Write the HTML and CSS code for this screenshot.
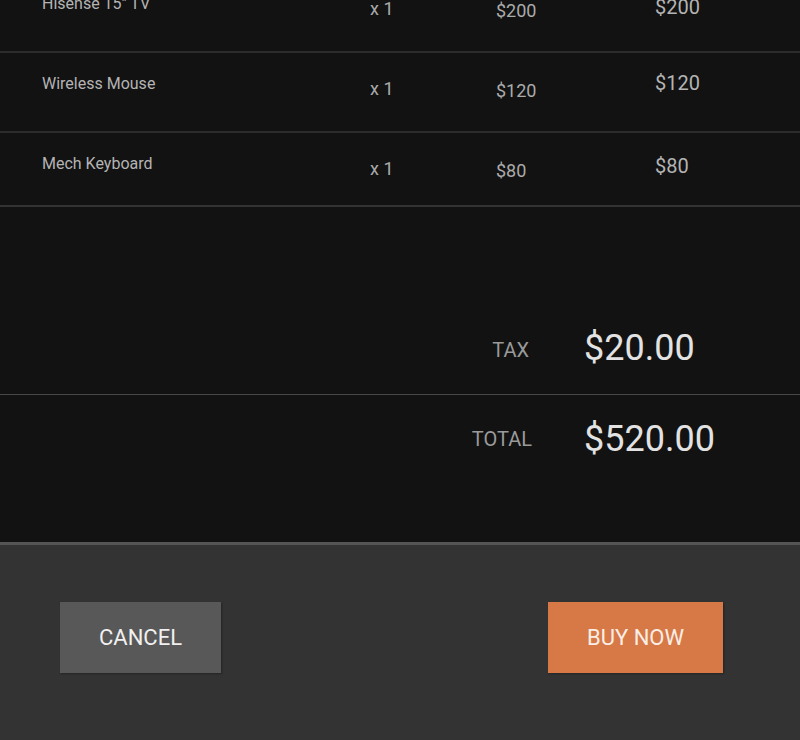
FILE: index.html
```html
<!DOCTYPE html>
<html>
<head>
<meta charset="utf-8">
<link rel="stylesheet" href="styles.css">
</head>
<body>
<div class="page">
  <div class="items">
    <div class="row row-1">
      <div class="cell name">Hisense 15" TV</div>
      <div class="cell qty">x 1</div>
      <div class="cell unit">$200</div>
      <div class="cell total">$200</div>
    </div>
    <div class="row row-2">
      <div class="cell name">Wireless Mouse</div>
      <div class="cell qty">x 1</div>
      <div class="cell unit">$120</div>
      <div class="cell total">$120</div>
    </div>
    <div class="row row-3">
      <div class="cell name">Mech Keyboard</div>
      <div class="cell qty">x 1</div>
      <div class="cell unit">$80</div>
      <div class="cell total">$80</div>
    </div>
  </div>
  <div class="summary">
    <div class="sum-row sum-tax">
      <div class="sum-label">TAX</div>
      <div class="sum-amount">$20.00</div>
    </div>
    <div class="sum-row sum-total">
      <div class="sum-label">TOTAL</div>
      <div class="sum-amount">$520.00</div>
    </div>
  </div>
  <div class="footer">
    <button class="btn btn-cancel">CANCEL</button>
    <button class="btn btn-buy">BUY NOW</button>
  </div>
</div>
</body>
</html>
```
FILE: styles.css
```css
html, body {
  margin: 0;
  padding: 0;
  background: #121212;
  font-family: Roboto, "Liberation Sans", sans-serif;
}

.page {
  width: 800px;
  overflow: hidden;
}

.items {
  margin-top: -27px;
}

.row {
  display: grid;
  grid-template-columns: 328px 126px 159px 1fr;
  padding-left: 42px;
  height: 78px;
  border-bottom: 2px solid #2c2c2c;
  align-items: start;
}

.row-3 {
  height: 72px;
  border-bottom-color: #333333;
}

.cell {
  line-height: 1;
  white-space: nowrap;
}

.name {
  font-size: 16px;
  color: #b4b4b4;
  margin-top: 23px;
}

.qty {
  font-size: 18px;
  color: #ababab;
  margin-top: 27px;
}

.unit {
  font-size: 18px;
  color: #ababab;
  margin-top: 29px;
}

.total {
  font-size: 20px;
  color: #b4b4b4;
  margin-top: 24px;
}

.row-2 .total {
  margin-top: 20px;
}

.row-3 .total {
  margin-top: 23px;
}

.sum-row {
  display: grid;
  grid-template-columns: 530px 1fr;
  column-gap: 54px;
  align-items: start;
}

.sum-tax {
  padding-top: 123px;
  padding-bottom: 28px;
  border-bottom: 1px solid #474747;
}

.sum-total {
  padding-top: 26px;
  padding-bottom: 85px;
}

.sum-label {
  text-align: right;
  font-size: 20px;
  line-height: 1;
  color: #9a9a9a;
}

.sum-tax .sum-label {
  margin-top: 10px;
  padding-right: 1px;
}

.sum-total .sum-label {
  margin-top: 8px;
  margin-right: -2px;
}

.sum-amount {
  font-size: 36px;
  line-height: 1;
  color: #e2e2e2;
}

.footer {
  background: #333333;
  border-top: 3px solid #555555;
  display: flex;
  justify-content: space-between;
  align-items: flex-start;
  padding: 57px 77px 67px 60px;
}

.btn {
  height: 71px;
  padding: 0 39px;
  border: none;
  border-radius: 0;
  font-family: Roboto, "Liberation Sans", sans-serif;
  font-size: 22px;
  font-weight: 400;
  color: #f0f0f0;
  box-shadow: 1px 1px 2px rgba(0, 0, 0, 0.3);
}

.btn-cancel {
  background: #585858;
}

.btn-buy {
  background: #d77946;
  color: #fbeee6;
}
```
